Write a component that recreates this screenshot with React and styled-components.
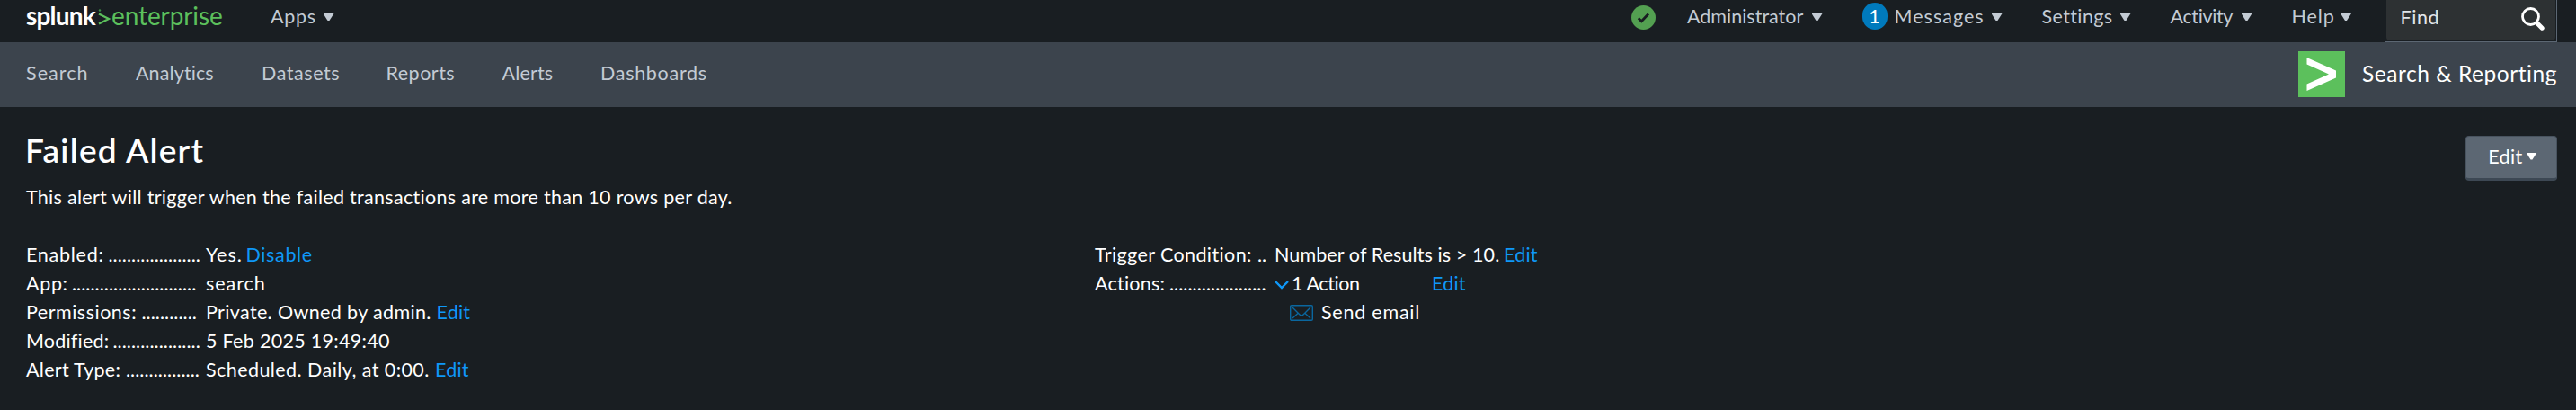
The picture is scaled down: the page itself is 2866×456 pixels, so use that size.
import React from "react";
import styled, { createGlobalStyle } from "styled-components";

const GlobalStyle = createGlobalStyle`
  *, *::before, *::after { box-sizing: border-box; }
  body {
    margin: 0;
    background: #191e22;
    color: #fff;
    font-family: Lato, "Liberation Sans", sans-serif;
    font-size: 21.5px;
    overflow: hidden;
  }
`;

const Page = styled.div`
  width: 2866px;
  height: 456px;
  display: flex;
  flex-direction: column;
`;

const Text = styled.span`
  white-space: nowrap;
  flex: none;
  letter-spacing: ${(p) => p.$track || 0}px;
  width: ${(p) => (p.$w ? `${p.$w}px` : "auto")};
`;

const TopBar = styled.header`
  height: 47px;
  display: flex;
  align-items: flex-start;
  padding: 0 21px 0 29px;
  color: #c3cbd4;
`;

const Brand = styled.div`
  display: flex;
  width: 272px;
  height: 36px;
  font-size: 28px;
  line-height: 34px;
  white-space: nowrap;
  color: #5cc05c;
`;

const BrandName = styled.span`
  width: 80px;
  font-weight: 700;
  letter-spacing: -0.8px;
  color: #fff;
`;

const BrandChevron = styled.svg`
  width: 14px;
  height: 18px;
  margin: 10px 1px 0 0;
`;

const BrandEdition = styled.span`
  letter-spacing: -0.1px;
`;

const Menus = styled.div`
  display: flex;
  height: 36px;
  gap: 44px;
  margin-left: auto;
  margin-right: 37px;
`;

const Menu = styled.div`
  display: flex;
  align-items: center;
  height: 36px;
  line-height: 36px;
`;

const Caret = styled.span`
  flex: none;
  width: 12px;
  height: 8px;
  margin-top: ${(p) => p.$drop || 0}px;
  background: currentColor;
  clip-path: polygon(0 0, 100% 0, 58% 100%, 42% 100%);
`;

const Badge = styled.span`
  width: 28px;
  height: 30px;
  margin-right: 8px;
  border-radius: 14px;
  background: #007abd;
  color: #fff;
  line-height: 31px;
  text-align: center;
`;

const Health = styled.svg`
  width: 27px;
  height: 27px;
  margin: 6px -9px 0 0;
`;

const Find = styled.div`
  width: 192px;
  height: 47px;
  padding: 0 1px 1px;
  border: 1px solid #5c6773;
  border-top: 0;
`;

const FindField = styled.div`
  height: 100%;
  display: flex;
  justify-content: space-between;
  padding: 0 12px 0 15.5px;
  border-radius: 0 0 4px 4px;
  background: #2d3133;
  color: #e1e6eb;
  line-height: 38px;
`;

const SearchIcon = styled.svg`
  width: 26px;
  height: 26px;
  margin-top: 8px;
`;

const NavBar = styled.nav`
  height: 72px;
  display: flex;
  align-items: center;
  gap: 53px;
  padding: 0 21px 4px 29px;
  background: #3c444d;
  color: #c3cbd4;
`;

const AppTitle = styled.div`
  display: flex;
  align-items: center;
  margin-left: auto;
  font-size: 24.5px;
  color: #fff;
`;

const AppIcon = styled.svg`
  width: 52px;
  height: 51px;
  margin: 3px 19px 0 0;
`;

const Heading = styled.section`
  height: 148px;
  display: flex;
  justify-content: space-between;
  padding: 0 21px 0 29px;
`;

const Title = styled.h1`
  margin: 26px 0 0 -1px;
  height: 53px;
  font-size: 37px;
  line-height: 44px;
  font-weight: 600;
  letter-spacing: 1.2px;
`;

const Description = styled.p`
  margin: 5px 0 0;
  line-height: 32px;
  letter-spacing: 0.3px;
`;

const EditButton = styled.button`
  width: 102px;
  height: 50px;
  margin: 32px 0 0;
  display: flex;
  align-items: center;
  padding: 0 0 3px 20.5px;
  border: 1px solid #48535f;
  border-bottom: 3px solid #3d4854;
  border-radius: 4px;
  background: #5c6773;
  color: #fff;
  font: inherit;
`;

const Details = styled.section`
  display: grid;
  grid-template-columns: 1189px 1fr;
  padding-left: 29px;
`;

const Row = styled.div`
  display: flex;
  height: 32px;
  line-height: 32px;
`;

const Term = styled.div`
  width: 200px;
  display: flex;
  gap: 5px;
`;

const Link = styled(Text)`
  color: #0f98f8;
`;

const Chevron = styled.svg`
  width: 16px;
  height: 11px;
  margin: 12px 3px 0 0;
`;

const ActionIndent = styled.span`
  width: 200px;
`;

const Envelope = styled.svg`
  width: 26px;
  height: 18px;
  margin: 8px 9px 0 17px;
`;

const menus = [
  { name: "Administrator", w: 138.5, track: 0 },
  { name: "Messages", w: 108, track: 1.03, count: 1 },
  { name: "Settings", w: 87, track: 0.39 },
  { name: "Activity", w: 79, track: -0.36 },
  { name: "Help", w: 54.5, track: 0.9 },
];

const links = [
  ["Search", 69, 1.05],
  ["Analytics", 87, 0.11],
  ["Datasets", 85.5, 0.57],
  ["Reports", 76, 0.49],
  ["Alerts", 56.5, 0.16],
  ["Dashboards", 120, 0.7],
];

const facts = [
  { term: ["Enabled:", 86.5, 0.74], dots: 20, value: ["Yes.", 44.5, 1], link: ["Disable", 0.65] },
  { term: ["App:", 46, 0.67], dots: 27, value: ["search", 70, 0.94] },
  { term: ["Permissions:", 123.5, 0.5], dots: 12, value: ["Private. Owned by admin.", 256.5, 0.36], link: ["Edit", 0.2] },
  { term: ["Modified:", 91.5, 0.21], dots: 19, value: ["5 Feb 2025 19:49:40", 210, 0.3] },
  { term: ["Alert Type:", 106, 0.28], dots: 16, value: ["Scheduled. Daily, at 0:00.", 255, 0.43], link: ["Edit", 0.2] },
];

function Fact({ term, dots, children }) {
  return (
    <Row>
      <Term>
        <Text $w={term[1]} $track={term[2]}>{term[0]}</Text>
        <Text $track={0.05}>{".".repeat(dots)}</Text>
      </Term>
      {children}
    </Row>
  );
}

export default function App() {
  return (
    <Page>
      <GlobalStyle />
      <TopBar>
        <Brand>
          <BrandName>splunk</BrandName>
          <BrandChevron viewBox="0 0 14 18">
            <path d="M1 5.5L12 11L1 16.5" fill="none" stroke="#5cc05c" strokeWidth="2.2" />
            <circle cx="2" cy="1.5" r="1.2" fill="#3c8a45" />
          </BrandChevron>
          <BrandEdition>enterprise</BrandEdition>
        </Brand>
        <Menu>
          <Text $w={58.5} $track={0.73}>Apps</Text>
          <Caret $drop={2} />
        </Menu>
        <Menus>
          <Health viewBox="0 0 27 27">
            <circle cx="13.5" cy="13.5" r="13.5" fill="#53a051" />
            <path d="M7.8 14.3L11.3 17.8L19 9.5" fill="none" stroke="#191e22" strokeWidth="2.8" />
          </Health>
          {menus.map((m) => (
            <Menu key={m.name}>
              {m.count && <Badge>{m.count}</Badge>}
              <Text $w={m.w} $track={m.track}>{m.name}</Text>
              <Caret $drop={2} />
            </Menu>
          ))}
        </Menus>
        <Find>
          <FindField>
            <Text $track={0.6}>Find</Text>
            <SearchIcon viewBox="0 0 26 26" fill="none" stroke="#fff">
              <circle cx="10.5" cy="10.5" r="9" strokeWidth="2.8" />
              <path d="M17.5 17.5L23.2 23.2" strokeWidth="5" strokeLinecap="round" />
            </SearchIcon>
          </FindField>
        </Find>
      </TopBar>

      <NavBar>
        {links.map(([name, w, track]) => (
          <Text key={name} $w={w} $track={track}>{name}</Text>
        ))}
        <AppTitle>
          <AppIcon viewBox="0 0 52 51">
            <path d="M0 0H52V51H0Z" fill="#5cc05c" />
            <path d="M9.5 7L42 21.5V29.5L9.5 44V36.5L34 25.5L9.5 14.5Z" fill="#fff" />
          </AppIcon>
          <Text $w={217} $track={0.54}>Search &amp; Reporting</Text>
        </AppTitle>
      </NavBar>

      <Heading>
        <div>
          <Title>Failed Alert</Title>
          <Description>
            This alert will trigger when the failed transactions are more than 10 rows per day.
          </Description>
        </div>
        <EditButton>
          <Text $w={46} $track={0.4}>Edit</Text>
          <Caret />
        </EditButton>
      </Heading>

      <Details>
        <div>
          {facts.map(({ term, dots, value, link }) => (
            <Fact key={term[0]} term={term} dots={dots}>
              <Text $w={value[1]} $track={value[2]}>{value[0]}</Text>
              {link && <Link $track={link[1]}>{link[0]}</Link>}
            </Fact>
          ))}
        </div>
        <div>
          <Fact term={["Trigger Condition:", 176, 0.4]} dots={2}>
            <Text $w={255} $track={0.1}>Number of Results is &gt; 10.</Text>
            <Link $track={0.2}>Edit</Link>
          </Fact>
          <Fact term={["Actions:", 78, 0.24]} dots={21}>
            <Chevron viewBox="0 0 16 11">
              <path d="M1 2L8 9L15 2" fill="none" stroke="#0f98f8" strokeWidth="2.4" />
            </Chevron>
            <Text $w={156} $track={-0.4}>1 Action</Text>
            <Link $track={0.2}>Edit</Link>
          </Fact>
          <Row>
            <ActionIndent />
            <Envelope viewBox="0 0 26 18" fill="none" stroke="#0a679f" strokeWidth="1.4">
              <rect x="0.7" y="0.7" width="24.6" height="16.6" rx="1.2" />
              <path d="M3 3L11 11Q13 13 15 11L23 3M3 15L9 9.5M23 15L17 9.5" />
            </Envelope>
            <Text $track={0.77}>Send email</Text>
          </Row>
        </div>
      </Details>
    </Page>
  );
}
